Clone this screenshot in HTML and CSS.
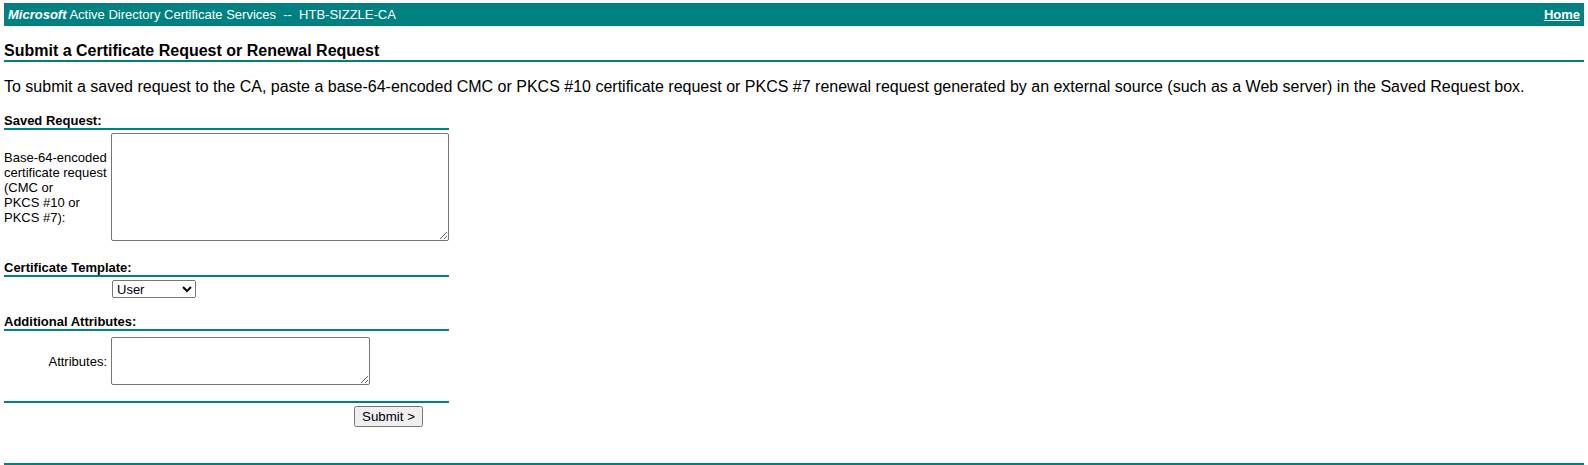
FILE: index.html
```html
<!DOCTYPE html>
<html>

<head>
    <title>Microsoft Active Directory Certificate Services</title>
    <link rel="stylesheet" href="styles.css">
</head>

<body>
    <div class="topbar">
        <span><b><i>Microsoft</i></b> Active Directory Certificate Services &nbsp;--&nbsp; HTB-SIZZLE-CA</span>
        <a href="/certsrv" class="home-link">Home</a>
    </div>

    <h1 class="page-title">Submit a Certificate Request or Renewal Request</h1>

    <p class="intro">To submit a saved request to the CA, paste a base-64-encoded CMC or PKCS #10 certificate request or PKCS #7 renewal request generated by an external source (such as a Web server) in the Saved Request box.</p>

    <form class="request-form" action="certfnsh.asp" method="post">
        <div class="section section-saved">
            <div class="section-head">Saved Request:</div>
            <div class="field-row">
                <label for="certRequest" class="field-label">Base-64-encoded<br>certificate request<br>(CMC or<br>PKCS #10 or<br>PKCS #7):</label>
                <textarea id="certRequest" name="CertRequest" class="request-box"></textarea>
            </div>
        </div>

        <div class="section section-template">
            <div class="section-head">Certificate Template:</div>
            <div class="field-row">
                <span class="field-label"></span>
                <select name="CertTemplate" class="template-select">
                    <option value="User">User</option>
                </select>
            </div>
        </div>

        <div class="section section-attrs">
            <div class="section-head">Additional Attributes:</div>
            <div class="field-row">
                <label for="attribs" class="field-label align-right">Attributes:</label>
                <textarea id="attribs" name="CertAttrib" class="attrib-box"></textarea>
            </div>
        </div>

        <div class="submit-row">
            <input type="submit" value="Submit &gt;" class="submit-btn">
        </div>
    </form>

    <div class="footer-rule"></div>
</body>

</html>
```

FILE: styles.css
```css
body {
    margin: 3px 4px 0;
    font-family: "Liberation Sans", Arial, sans-serif;
    color: #000;
    background: #fff;
}

.topbar {
    display: flex;
    justify-content: space-between;
    background-color: #008080;
    color: #fff;
    padding: 4px;
    font-size: 13px;
    line-height: 15px;
}

.home-link {
    color: #fff;
    font-weight: bold;
}

.page-title {
    margin: 15px 0 0;
    padding-bottom: 0;
    border-bottom: 2px solid #008080;
    font-size: 16px;
    line-height: 19px;
}

.intro {
    margin: 16px 0 0;
    font-size: 16px;
    line-height: 18px;
}

.request-form {
    width: 445px;
    font-size: 13px;
    line-height: 15px;
}

.section-head {
    font-weight: bold;
    border-bottom: 2px solid #008080;
}

.section-saved {
    margin-top: 17px;
}

.section-template {
    margin-top: 19px;
}

.section-attrs {
    margin-top: 16px;
}

.field-row {
    display: grid;
    grid-template-columns: 103px auto;
    column-gap: 4px;
    align-items: center;
    justify-content: start;
    margin-top: 3px;
}

.section-attrs .field-row {
    margin-top: 6px;
}

.align-right {
    text-align: right;
}

textarea {
    box-sizing: border-box;
    display: block;
    margin: 0;
    border: 1px solid #767676;
    border-radius: 2px;
    padding: 2px;
    font-family: "Liberation Mono", monospace;
    font-size: 13px;
}

.request-box {
    width: 338px;
    height: 108px;
}

.attrib-box {
    width: 259px;
    height: 48px;
}

.template-select {
    box-sizing: border-box;
    width: 84px;
    height: 18px;
    margin: 0 0 0 1px;
    font-family: "Liberation Sans", Arial, sans-serif;
    font-size: 13px;
}

.submit-row {
    margin-top: 16px;
    padding-top: 3px;
    border-top: 2px solid #008080;
}

.submit-btn {
    margin: 0 0 0 350px;
    font-family: "Liberation Sans", Arial, sans-serif;
    font-size: 13.333px;
}

.footer-rule {
    height: 2px;
    margin-top: 36px;
    background-color: #008080;
}
```
